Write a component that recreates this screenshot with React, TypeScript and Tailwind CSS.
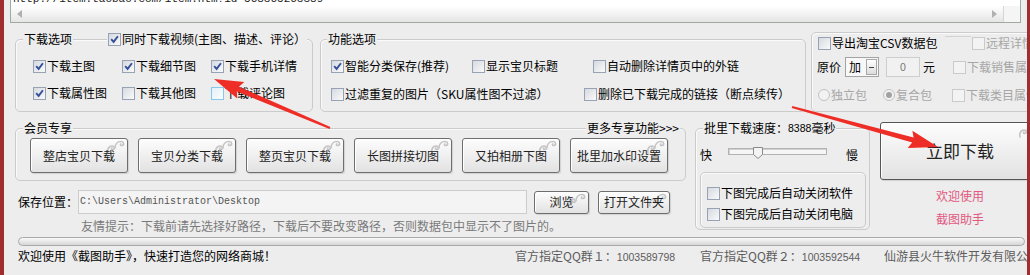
import clsx from "clsx"
import type { ReactNode } from "react"

function Check({ on = false, off = false, hot = false }: { on?: boolean; off?: boolean; hot?: boolean }) {
    return (
        <span
            className={clsx(
                "flex h-[13px] w-[13px] shrink-0 items-center justify-center border",
                off
                    ? "border-[#cacaca] bg-[#f3f3f3]"
                    : hot
                      ? "border-[#86c8ec] bg-[linear-gradient(135deg,#e2f0f8,#fdfdfd)]"
                      : "border-[#97a3b4] bg-[linear-gradient(135deg,#d5d9df,#fafafa)]"
            )}
        >
            {on && (
                <svg width="9" height="9" viewBox="0 0 9 9">
                    <path d="M1.2 4.2 L3.6 6.9 L7.9 1.2" fill="none" stroke="#34509a" strokeWidth="1.9" />
                </svg>
            )}
        </span>
    )
}

function Opt({ children, on, off, hot, className }: { children: ReactNode; on?: boolean; off?: boolean; hot?: boolean; className?: string }) {
    return (
        <div className={clsx("flex h-[16px] shrink-0 items-center gap-[1px] whitespace-nowrap", off && "text-[#a6a6a6]", className)}>
            <Check on={on} off={off} hot={hot} />
            <span>{children}</span>
        </div>
    )
}

function Radio({ on = false }: { on?: boolean }) {
    return (
        <span className="flex h-[12px] w-[12px] shrink-0 items-center justify-center rounded-full border border-[#c2c2c2] bg-[#f2f2f2]">
            {on && <span className="h-[6px] w-[6px] rounded-full bg-[#a2a2a2]" />}
        </span>
    )
}

function Group({ className, children }: { className?: string; children?: ReactNode }) {
    return (
        <div className={clsx("shrink-0 rounded-[5px] border border-[#cbcbcb] shadow-[inset_1px_1px_0_#fafafa]", className)}>
            {children}
        </div>
    )
}

function Legend({ children, className }: { children: ReactNode; className?: string }) {
    return <span className={clsx("flex items-center bg-[#ededed] px-[1px] whitespace-nowrap", className)}>{children}</span>
}

function Swirl() {
    return (
        <svg
            width="20"
            height="14"
            viewBox="0 0 20 14"
            className="absolute right-[1px] top-[1px]"
            fill="none"
            stroke="#c4c4c4"
            strokeWidth="1.6"
            strokeLinecap="round"
        >
            <path d="M2 13 C1 9 3 6 6 6 C8.5 6 9 9 7 9.5 C5.8 9.8 5.2 8.8 5.8 8" />
            <path d="M9 8 C9 4 11.5 1.5 15 1.5 C18 1.5 18.5 5 16 5.5 C14.5 5.8 14 4.5 14.8 4" />
        </svg>
    )
}

function Btn({ children, className }: { children: ReactNode; className?: string }) {
    return (
        <div
            className={clsx(
                "relative flex shrink-0 items-center justify-center rounded-[3px] border border-[#6e6e6e] bg-[linear-gradient(#fdfdfd,#e2e2e2)] text-[#222] shadow-[inset_1px_1px_0_#ffffff,1px_1px_1px_rgba(0,0,0,0.12)]",
                className
            )}
        >
            <Swirl />
            <span className="relative">{children}</span>
        </div>
    )
}

// red annotation arrows, page coordinates
function arrow(x1: number, y1: number, x2: number, y2: number) {
    const dx = x2 - x1
    const dy = y2 - y1
    const L = Math.hypot(dx, dy)
    const ux = dx / L
    const uy = dy / L
    const nx = -uy
    const ny = ux
    const hl = 26
    const hw = 9
    const nw = 2.6
    const tw = 1.1
    const bx = x2 - ux * hl
    const by = y2 - uy * hl
    const p = (x: number, y: number) => `${x.toFixed(1)},${y.toFixed(1)}`
    return [
        p(x1 + nx * tw, y1 + ny * tw),
        p(bx + nx * nw, by + ny * nw),
        p(bx - ux * 3 + nx * hw, by - uy * 3 + ny * hw),
        p(x2, y2),
        p(bx - ux * 3 - nx * hw, by - uy * 3 - ny * hw),
        p(bx - nx * nw, by - ny * nw),
        p(x1 - nx * tw, y1 - ny * tw),
    ].join(" ")
}

const MONO = "font-['Liberation_Mono',monospace]"
const NUM = "font-['Liberation_Sans',sans-serif] text-[10.5px]"

export default function App() {
    return (
        <div className="relative h-[275px] w-[1030px] overflow-hidden border-l-[4px] border-r-[3px] border-[#a02e2e] bg-[#ededed] font-['Noto_Sans_CJK_SC','Noto_Sans',sans-serif] text-[12px] leading-[14px] text-black">
            {/* url box, scrolled */}
            <div className="ml-[6px] flex h-[23px] w-[1011px] flex-col border-x border-b border-[#9fab9f] bg-white">
                <div className="h-[6px] overflow-hidden pl-[2px]">
                    <div className={clsx("-mt-[8px] whitespace-nowrap text-[11px] leading-[14px] text-[#222]", MONO)}>
                        http://item.taobao.com/item.htm?id=568365263389
                    </div>
                </div>
                <div className="flex h-[16px]">
                    <div className="flex flex-1 items-center justify-between bg-[linear-gradient(#ffffff,#e5e5e5)] px-[6px]">
                        <svg width="5" height="8" viewBox="0 0 5 8"><path d="M5 0 L0 4 L5 8 Z" fill="#b0b0b0" /></svg>
                        <svg width="5" height="8" viewBox="0 0 5 8"><path d="M0 0 L5 4 L0 8 Z" fill="#b0b0b0" /></svg>
                    </div>
                    <div className="w-[17px] border-l border-[#d6d6d6] bg-[#f5f5f5]" />
                </div>
            </div>

            {/* options */}
            <div className="mt-[7px] flex items-start">
                <Group className="ml-[11px] mt-[9px] h-[73px] w-[298px]">
                    <div className="-mt-[8px] flex h-[14px] items-center pl-[7px]">
                        <Legend>下载选项</Legend>
                        <Legend className="ml-[34px] gap-[1px]">
                            <Check on />
                            同时下载视频(主图、描述、评论）
                        </Legend>
                    </div>
                    <div className="ml-[17px] mt-[12px] grid grid-cols-[89px_89px_89px] gap-y-[11px]">
                        <Opt on>下载主图</Opt>
                        <Opt on>下载细节图</Opt>
                        <Opt on>下载手机详情</Opt>
                        <Opt on>下载属性图</Opt>
                        <Opt>下载其他图</Opt>
                        <Opt hot>下载评论图</Opt>
                    </div>
                </Group>

                <Group className="ml-[7px] mt-[9px] h-[73px] w-[486px]">
                    <div className="-mt-[8px] flex h-[14px] items-center pl-[6px]">
                        <Legend>功能选项</Legend>
                    </div>
                    <div className="mt-[12px] flex pl-[10px]">
                        <Opt on className="w-[141px]">智能分类保存(推荐)</Opt>
                        <Opt className="w-[121px]">显示宝贝标题</Opt>
                        <Opt>自动删除详情页中的外链</Opt>
                    </div>
                    <div className="mt-[12px] flex pl-[10px]">
                        <Opt className="w-[253px]">过滤重复的图片（SKU属性图不过滤）</Opt>
                        <Opt>删除已下载完成的链接（断点续传）</Opt>
                    </div>
                </Group>

                <Group className="ml-[5px] mt-[2px] h-[80px] w-[240px]">
                    <div className="mt-[3px] flex h-[14px] items-center pl-[6px]">
                        <Opt className="w-[127px]">导出淘宝CSV数据包</Opt>
                        <div className="h-0 w-[26px] self-start border-t border-[#d2d2d2]" />
                        <Opt off className="ml-[1px]">远程详情</Opt>
                    </div>
                    <div className="mt-[7px] flex h-[20px] items-center pl-[5px]">
                        <span className="w-[24px]">原价</span>
                        <div className="ml-[4px] flex h-[20px] w-[34px] items-center border border-[#a3a3a3] bg-[#f8f8f8] pl-[3px]">
                            <span className="flex-1">加</span>
                            <span className="mr-[1px] flex h-[16px] w-[11px] items-center justify-center border border-[#a8a8a8] bg-[linear-gradient(#ffffff,#dcdcdc)]">
                                <span className="h-[1px] w-[5px] bg-[#444]" />
                            </span>
                        </div>
                        <div className={clsx("ml-[7px] flex h-[20px] w-[34px] items-center justify-center border border-[#cdcdcd] bg-[#f1f1f1] text-[#777]", NUM)}>
                            0
                        </div>
                        <span className="ml-[3px]">元</span>
                        <Opt off className="ml-[18px]">下载销售属性</Opt>
                    </div>
                    <div className="mt-[10px] flex h-[16px] items-center pl-[6px] text-[#a6a6a6]">
                        <div className="flex w-[65px] items-center gap-[1px]">
                            <Radio />
                            <span>独立包</span>
                        </div>
                        <div className="flex w-[69px] items-center gap-[1px]">
                            <Radio on />
                            <span>复合包</span>
                        </div>
                        <Opt off>下载类目属性</Opt>
                    </div>
                </Group>
            </div>

            {/* member + speed + go */}
            <div className="flex h-[124px] items-start">
                <div className="ml-[11px] flex w-[671px] shrink-0 flex-col">
                    <Group className="mt-[16px] h-[53px] w-[671px]">
                        <div className="-mt-[8px] flex h-[14px] items-center justify-between pl-[7px] pr-[5px]">
                            <Legend>会员专享</Legend>
                            <Legend>更多专享功能&gt;&gt;&gt;</Legend>
                        </div>
                        <div className="ml-[14px] mt-[3px] flex gap-[10px]">
                            <Btn className="h-[35px] w-[98px]">整店宝贝下载</Btn>
                            <Btn className="h-[35px] w-[98px]">宝贝分类下载</Btn>
                            <Btn className="h-[35px] w-[98px]">整页宝贝下载</Btn>
                            <Btn className="h-[35px] w-[98px]">长图拼接切图</Btn>
                            <Btn className="h-[35px] w-[98px]">又拍相册下图</Btn>
                            <Btn className="h-[35px] w-[98px]">批里加水印设置</Btn>
                        </div>
                    </Group>
                    <div className="mt-[9px] flex h-[24px] items-center">
                        <span className="ml-[3px] w-[60px]">保存位置：</span>
                        <div className={clsx("flex h-[24px] w-[449px] items-center border border-[#cdcdcd] bg-[#f4f4f4] pl-[1px] text-[10px] text-[#555]", MONO)}>
                            C:\Users\Administrator\Desktop
                        </div>
                        <Btn className="ml-[7px] h-[23px] w-[55px]">浏览</Btn>
                        <Btn className="ml-[9px] h-[23px] w-[72px]">打开文件夹</Btn>
                    </div>
                    <div className="ml-[66px] mt-[5px] whitespace-nowrap text-[#7a7a7a]">
                        友情提示：下载前请先选择好路径，下载后不要改变路径，否则数据包中显示不了图片的。
                    </div>
                </div>

                <Group className="ml-[9px] mt-[16px] h-[102px] w-[175px]">
                    <div className="-mt-[8px] flex h-[14px] items-center pl-[7px]">
                        <Legend>
                            批里下载速度：<span className={NUM}>8388</span>毫秒
                        </Legend>
                    </div>
                    <div className="mt-[13px] flex h-[14px] items-center">
                        <span className="ml-[4px]">快</span>
                        <div className="relative ml-[16px] h-[7px] w-[99px] self-start border border-[#b3b3b3] bg-[#f6f6f6] shadow-[inset_1px_1px_0_#d0d0d0]">
                            <svg width="10" height="12" viewBox="0 0 10 12" className="absolute -top-[2px] left-[24px]">
                                <path d="M0.5 0.5 H9.5 V7.5 L5 11.5 L0.5 7.5 Z" fill="#f4f4f4" stroke="#8a8a8a" />
                            </svg>
                        </div>
                        <span className="ml-[19px]">慢</span>
                    </div>
                    <Group className="ml-[4px] mt-[10px] h-[56px] w-[166px]">
                        <Opt className="ml-[6px] mt-[12px]">下图完成后自动关闭软件</Opt>
                        <Opt className="ml-[6px] mt-[5px]">下图完成后自动关闭电脑</Opt>
                    </Group>
                </Group>

                <div className="ml-[10px] mt-[10px] flex w-[160px] shrink-0 flex-col items-center">
                    <Btn className="h-[58px] w-[160px] border-[#555] text-[17px] leading-[20px]">立即下载</Btn>
                    <span className="mt-[9px] text-[#e2587f]">欢迎使用</span>
                    <span className="mt-[9px] text-[#e2587f]">截图助手</span>
                </div>
            </div>

            {/* progress */}
            <div className="ml-[14px] mt-[1px] h-[9px] w-[1007px] rounded-full border border-[#a9a9a9] bg-[linear-gradient(#fafafa,#d6d6d6)]" />

            {/* status */}
            <div className="flex h-[29px] items-start whitespace-nowrap pt-[3px]">
                <span className="ml-[14px] w-[497px] shrink-0">欢迎使用《截图助手》，快速打造您的网络商城！</span>
                <span className="w-[185px] shrink-0 text-[#5c5c5c]">
                    官方指定QQ群１：<span className={NUM}>1003589798</span>
                </span>
                <span className="w-[184px] shrink-0 text-[#5c5c5c]">
                    官方指定QQ群２：<span className={NUM}>1003592544</span>
                </span>
                <span className="text-[#5c5c5c]">仙游县火牛软件开发有限公司</span>
            </div>

            <svg className="pointer-events-none absolute -left-[4px] top-0 h-[275px] w-[1030px]" viewBox="0 0 1030 275">
                <polygon points={arrow(330, 128, 214, 79)} fill="#ee2d26" />
                <polygon points={arrow(792, 107, 938, 147)} fill="#ee2d26" />
            </svg>
        </div>
    )
}
